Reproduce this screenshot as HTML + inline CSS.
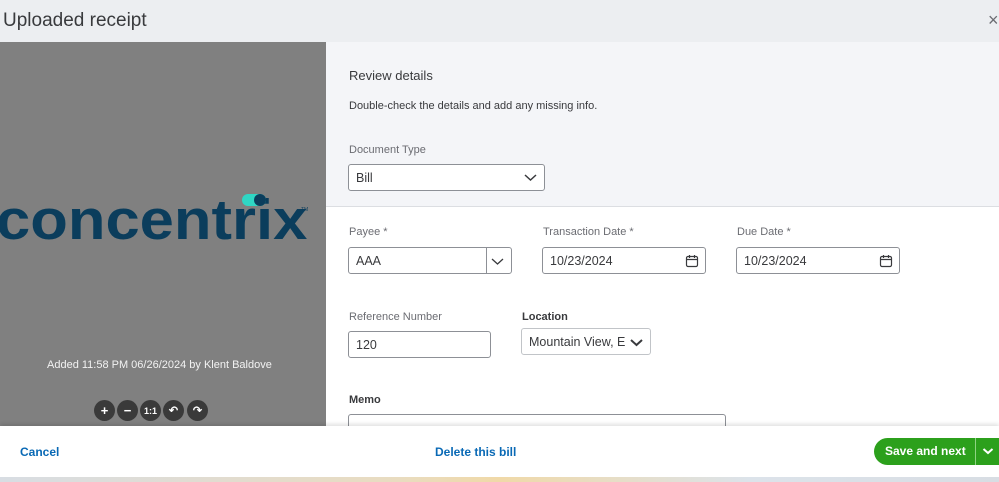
<!DOCTYPE html><html><head><style>
*{box-sizing:border-box;margin:0;padding:0}
body{width:999px;height:482px;overflow:hidden;font-family:"Liberation Sans",sans-serif;background:#fff;position:relative;color:#393a3d}
.a{position:absolute}
.lbl{font-size:11px;color:#6b6c72}
.inp{position:absolute;border:1px solid #8d9096;border-radius:3px;background:#fff;font-size:12.5px;color:#393a3d;padding-left:7px;display:flex;align-items:center}
.btn{position:absolute;width:21px;height:21px;border-radius:50%;background:#3a3a3a;color:#fff;font-size:13px;font-weight:bold;display:flex;align-items:center;justify-content:center;top:400px}
</style></head><body>
<div class="a" style="left:0;top:0;width:999px;height:42px;background:#eceef1"></div>
<div class="a" style="left:3px;top:10px;font-size:19px;color:#393a3d">Uploaded receipt</div>
<div class="a" style="left:988px;top:10px;font-size:18px;color:#6b6c72">×</div>
<div class="a" style="left:0;top:42px;width:326px;height:384px;background:#808080"></div>
<div class="a" style="left:-4px;top:190px;font-size:57px;font-weight:bold;color:#0b3d5c;line-height:60px;transform:scaleX(1.08);transform-origin:left">concentrix</div>
<div class="a" style="left:242px;top:194px;width:24px;height:12px;border-radius:6px;background:#2fd6c4"></div>
<div class="a" style="left:254px;top:194px;width:12px;height:12px;border-radius:6px;background:#0b3d5c"></div>
<div class="a" style="left:301px;top:207px;font-size:5px;color:#0b3d5c">TM</div>
<div class="a" style="left:47px;top:359px;font-size:11px;color:#f2f2f2">Added 11:58 PM 06/26/2024 by Klent Baldove</div>
<div class="btn" style="left:94px">+</div><div class="btn" style="left:117px">−</div><div class="btn" style="left:140px;font-size:9px">1:1</div><div class="btn" style="left:163px;font-size:11px">↶</div><div class="btn" style="left:187px;font-size:11px">↷</div>
<div class="a" style="left:326px;top:42px;width:673px;height:165px;background:#f4f5f8;border-bottom:1px solid #dcdee2"></div>
<div class="a" style="left:349px;top:68px;font-size:13px;color:#393a3d">Review details</div>
<div class="a" style="left:349px;top:100px;font-size:11px;color:#393a3d">Double-check the details and add any missing info.</div>
<div class="a lbl" style="left:349px;top:144px">Document Type</div>
<div class="inp" style="left:348px;top:164px;width:197px;height:27px">Bill<svg class="a" style="right:7px;top:8px" width="13" height="9"><path d="M1 2l5.5 5 5.5-5" stroke="#393a3d" stroke-width="1.5" fill="none"/></svg></div>
<div class="a lbl" style="left:349px;top:226px">Payee *</div>
<div class="inp" style="left:348px;top:247px;width:164px;height:27px">AAA<div class="a" style="left:137px;top:0;width:1px;height:25px;background:#8d9096"></div><svg class="a" style="right:7px;top:9px" width="13" height="9"><path d="M1 2l5.5 5 5.5-5" stroke="#393a3d" stroke-width="1.3" fill="none"/></svg></div>
<div class="a lbl" style="left:543px;top:226px">Transaction Date *</div>
<div class="inp" style="left:542px;top:247px;width:164px;height:27px">10/23/2024<svg class="a" style="right:6px;top:6px" width="14" height="14"><rect x="1.5" y="2.5" width="11" height="10" rx="1.5" stroke="#393a3d" fill="none" stroke-width="1.2"/><path d="M1.5 5.5h11M4.5 1v3M9.5 1v3" stroke="#393a3d" stroke-width="1.2"/></svg></div>
<div class="a lbl" style="left:737px;top:226px">Due Date *</div>
<div class="inp" style="left:736px;top:247px;width:164px;height:27px">10/23/2024<svg class="a" style="right:6px;top:6px" width="14" height="14"><rect x="1.5" y="2.5" width="11" height="10" rx="1.5" stroke="#393a3d" fill="none" stroke-width="1.2"/><path d="M1.5 5.5h11M4.5 1v3M9.5 1v3" stroke="#393a3d" stroke-width="1.2"/></svg></div>
<div class="a lbl" style="left:349px;top:311px">Reference Number</div>
<div class="inp" style="left:348px;top:331px;width:143px;height:27px">120</div>
<div class="a" style="left:522px;top:311px;font-size:11px;font-weight:bold;color:#393a3d">Location</div>
<div class="inp" style="left:521px;top:328px;width:130px;height:27px;border-color:#c1c4c8;overflow:hidden;white-space:nowrap"><span style="display:inline-block;width:97px;overflow:hidden">Mountain View, E</span><svg class="a" style="right:7px;top:9px" width="13" height="9"><path d="M1 2l5.5 5 5.5-5" stroke="#393a3d" stroke-width="2" fill="none"/></svg></div>
<div class="a" style="left:349px;top:394px;font-size:11px;font-weight:bold;color:#393a3d">Memo</div>
<div class="a" style="left:348px;top:414px;width:378px;height:20px;border:1px solid #8d9096;border-radius:3px;background:#fff"></div>
<div class="a" style="left:0;top:426px;width:999px;height:51px;background:#fff;box-shadow:0 -2px 4px rgba(0,0,0,.12)"></div>
<div class="a" style="left:20px;top:445px;font-size:12px;font-weight:bold;color:#0969b5">Cancel</div>
<div class="a" style="left:435px;top:445px;font-size:12px;font-weight:bold;color:#0969b5">Delete this bill</div>
<div class="a" style="left:874px;top:438px;width:125px;height:27px;border-radius:14px 0 0 14px;background:#2ca01c"></div>
<div class="a" style="left:885px;top:444px;font-size:12px;font-weight:bold;color:#fff">Save and next</div>
<div class="a" style="left:975px;top:438px;width:1px;height:27px;background:#8fd383"></div>
<svg class="a" style="left:982px;top:447px" width="12" height="9"><path d="M1.5 2l4.5 4 4.5-4" stroke="#fff" stroke-width="2" fill="none"/></svg>
<div class="a" style="left:0;top:477px;width:999px;height:5px;background:linear-gradient(90deg,#d8dde3,#e9dcc0 40%,#f0d9a8 50%,#dce3ea 75%,#d8dde3)"></div>
</body></html>
